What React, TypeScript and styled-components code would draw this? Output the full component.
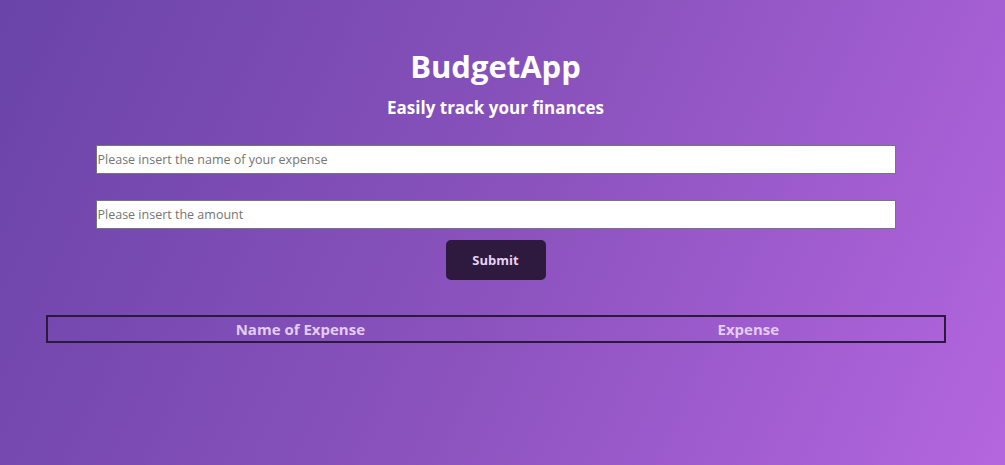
import React, { useState } from "react";
import styled, { createGlobalStyle } from "styled-components";

const GlobalStyle = createGlobalStyle`
  html, body {
    margin: 0;
    padding: 0;
  }
  body {
    font-family: "Open Sans", "Noto Sans", sans-serif;
  }
`;

const Page = styled.div`
  min-height: 465px;
  box-sizing: border-box;
  background: linear-gradient(115deg, #6a44a8 0%, #8a52bd 50%, #b466df 100%);
  display: flex;
  flex-direction: column;
  align-items: center;
  padding: 44px 14px 0 0;
`;

const Title = styled.h1`
  margin: 0 0 6px;
  color: #ffffff;
  font-size: 31px;
  font-weight: 700;
  line-height: 44px;
`;

const Subtitle = styled.h2`
  margin: 0 0 23px;
  color: #ffffff;
  font-size: 17px;
  font-weight: 700;
  line-height: 28px;
`;

const Form = styled.form`
  display: flex;
  flex-direction: column;
  align-items: center;
  gap: 26px;
`;

const Input = styled.input`
  width: 800px;
  height: 29px;
  box-sizing: border-box;
  border: 1px solid #767676;
  background: #ffffff;
  padding: 0 1px;
  font-family: "Open Sans", sans-serif;
  font-size: 12.5px;
  outline: none;

  &::placeholder {
    color: #757575;
  }
`;

const SubmitButton = styled.button`
  width: 100px;
  height: 40px;
  margin-top: -15px;
  border: none;
  border-radius: 5px;
  background: #2d1a3e;
  color: #e6d2f2;
  font-family: "Open Sans", sans-serif;
  font-size: 13px;
  font-weight: 700;
  cursor: pointer;
`;

const Table = styled.table`
  width: 900px;
  margin-top: 35px;
  border: 2px solid #2b1a3c;
  border-collapse: collapse;
`;

const HeadCell = styled.th<{ $width: number }>`
  width: ${(p) => p.$width}px;
  padding: 0;
  height: 24px;
  color: #e2cdf2;
  font-size: 15px;
  font-weight: 700;
  text-align: center;
`;

export default function App() {
  const [name, setName] = useState("");
  const [amount, setAmount] = useState("");

  return (
    <>
      <GlobalStyle />
      <Page>
        <Title>BudgetApp</Title>
        <Subtitle>Easily track your finances</Subtitle>
        <Form onSubmit={(e) => e.preventDefault()}>
          <Input
            placeholder="Please insert the name of your expense"
            value={name}
            onChange={(e) => setName(e.target.value)}
          />
          <Input
            placeholder="Please insert the amount"
            value={amount}
            onChange={(e) => setAmount(e.target.value)}
          />
          <SubmitButton type="submit">Submit</SubmitButton>
        </Form>
        <Table>
          <thead>
            <tr>
              <HeadCell $width={508}>Name of Expense</HeadCell>
              <HeadCell $width={392}>Expense</HeadCell>
            </tr>
          </thead>
        </Table>
      </Page>
    </>
  );
}
